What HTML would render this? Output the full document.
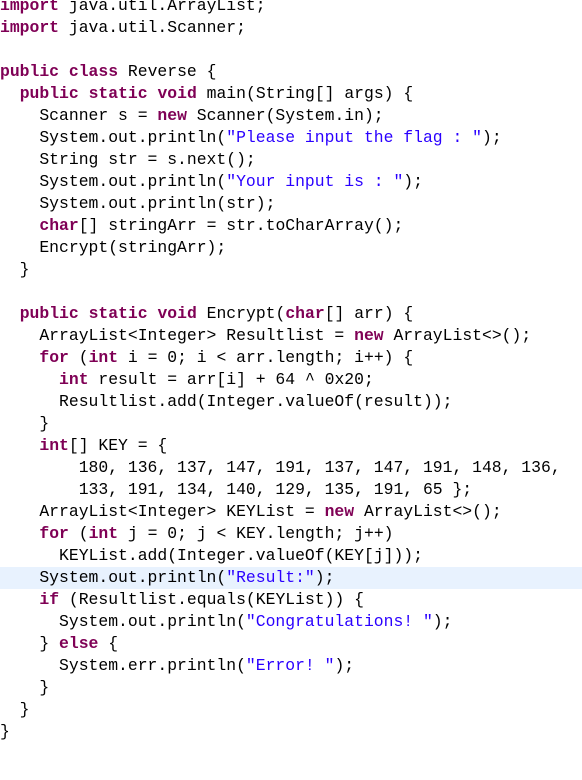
<!DOCTYPE html>
<html><head><style>
html,body{margin:0;padding:0;background:#fff;width:582px;height:780px;overflow:hidden}
pre{position:absolute;left:0;top:-5px;margin:0;font-family:"Liberation Mono",monospace;font-size:16.4px;line-height:22px;color:#000}
.k{color:#7f0055;font-weight:bold}
.s{color:#2a00ff}
.hl{position:absolute;left:0;top:567px;width:582px;height:22px;background:#e8f2fe}
</style></head><body>
<div class="hl"></div>
<pre><span class="k">import</span> java.util.ArrayList;
<span class="k">import</span> java.util.Scanner;

<span class="k">public</span> <span class="k">class</span> Reverse {
  <span class="k">public</span> <span class="k">static</span> <span class="k">void</span> main(String[] args) {
    Scanner s = <span class="k">new</span> Scanner(System.in);
    System.out.println(<span class="s">"Please input the flag : "</span>);
    String str = s.next();
    System.out.println(<span class="s">"Your input is : "</span>);
    System.out.println(str);
    <span class="k">char</span>[] stringArr = str.toCharArray();
    Encrypt(stringArr);
  }

  <span class="k">public</span> <span class="k">static</span> <span class="k">void</span> Encrypt(<span class="k">char</span>[] arr) {
    ArrayList&lt;Integer&gt; Resultlist = <span class="k">new</span> ArrayList&lt;&gt;();
    <span class="k">for</span> (<span class="k">int</span> i = 0; i &lt; arr.length; i++) {
      <span class="k">int</span> result = arr[i] + 64 ^ 0x20;
      Resultlist.add(Integer.valueOf(result));
    }
    <span class="k">int</span>[] KEY = {
        180, 136, 137, 147, 191, 137, 147, 191, 148, 136,
        133, 191, 134, 140, 129, 135, 191, 65 };
    ArrayList&lt;Integer&gt; KEYList = <span class="k">new</span> ArrayList&lt;&gt;();
    <span class="k">for</span> (<span class="k">int</span> j = 0; j &lt; KEY.length; j++)
      KEYList.add(Integer.valueOf(KEY[j]));
    System.out.println(<span class="s">"Result:"</span>);
    <span class="k">if</span> (Resultlist.equals(KEYList)) {
      System.out.println(<span class="s">"Congratulations! "</span>);
    } <span class="k">else</span> {
      System.err.println(<span class="s">"Error! "</span>);
    }
  }
}</pre>
</body></html>
